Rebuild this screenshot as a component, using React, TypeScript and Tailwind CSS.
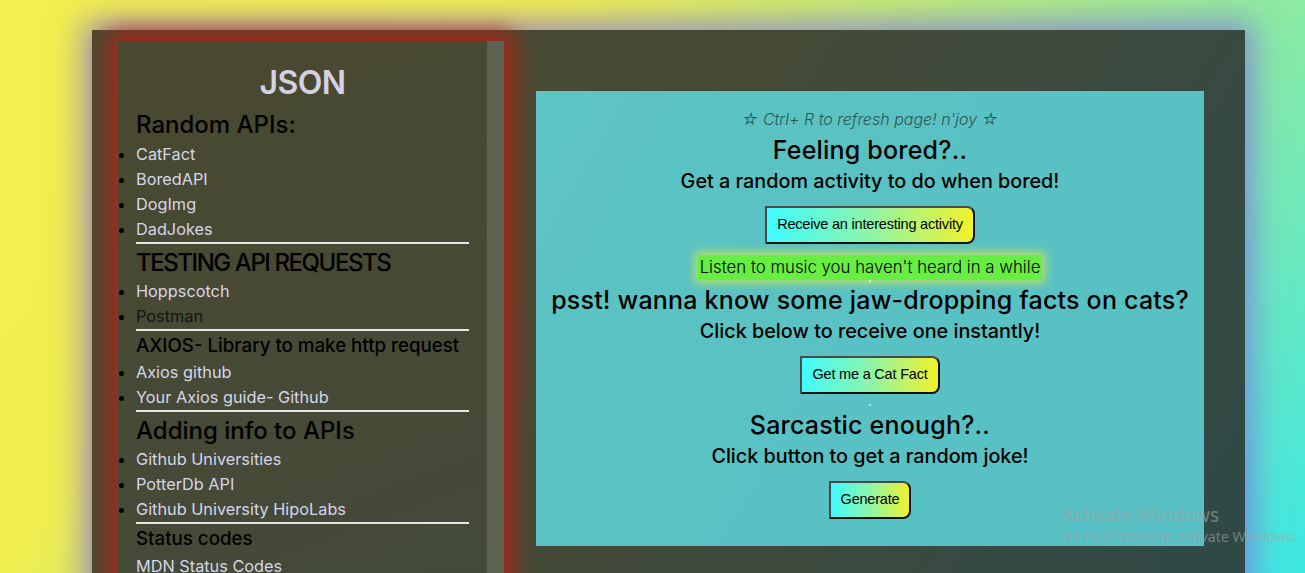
import React from "react";

const linkCls = "text-[#d6d6ea]";

function Li({ children, dark }: { children: React.ReactNode; dark?: boolean }) {
  return (
    <li className="h-[25px] leading-[25px] text-[16.3px] text-black">
      <span className={dark ? "text-[#151515]" : linkCls}>{children}</span>
    </li>
  );
}

function Rule() {
  return <div className="h-[2px] bg-[#e6e6e6]" />;
}

function Btn({ children }: { children: React.ReactNode }) {
  return (
    <button className="h-[38px] px-[10px] text-[14.5px] tracking-[-0.2px] font-['Liberation_Sans',Arial,sans-serif] text-black border-2 border-[#4a4a4a] border-r-[#111] border-b-[#111] rounded-r-[8px] bg-[linear-gradient(to_right,#3ffcff,#8ef5a8_50%,#f2f22a)]">
      {children}
    </button>
  );
}

export default function App() {
  return (
    <div className="relative h-[573px] w-[1305px] overflow-hidden bg-[linear-gradient(135deg,#f3ef4e_0%,#f0ee50_30%,#3de8e4_100%)] font-['Inter','Noto_Sans',sans-serif]">
      <div className="ml-[92px] mt-[30px] flex h-[600px] w-[1153px] items-start bg-[linear-gradient(120deg,#4b4a30_0%,#474a34_40%,#2e4948_100%)] shadow-[0_0_30px_8px_rgba(125,110,225,0.75)]">
        {/* Sidebar */}
        <div className="ml-[26px] mt-[11px] flex h-[600px] w-[386px] shadow-[0_0_22px_9px_#ab2619]">
          <div className="flex-1 bg-[linear-gradient(160deg,#4a4930,#434a3a)] px-[18px] pt-[22px]">
            <div className="h-[40px] text-center text-[32px] font-semibold leading-[40px] tracking-[-0.5px] text-[#d2d2e2]">JSON</div>
            <div className="mt-[7px] h-[30px] text-[24px] font-medium leading-[30px] text-black">Random APIs:</div>
            <ul className="mt-[2px] list-disc">
              <Li>CatFact</Li>
              <Li>BoredAPI</Li>
              <Li>DogImg</Li>
              <Li>DadJokes</Li>
            </ul>
            <Rule />
            <div className="mt-[4px] h-[30px] text-[24px] font-medium leading-[30px] tracking-[-0.06em] text-black">TESTING API REQUESTS</div>
            <ul className="mt-[1px] list-disc">
              <Li>Hoppscotch</Li>
              <Li dark>Postman</Li>
            </ul>
            <Rule />
            <div className="mt-[3px] h-[24px] text-[18.72px] font-medium leading-[24px] text-black">AXIOS- Library to make http request</div>
            <ul className="mt-[2px] list-disc">
              <Li>Axios github</Li>
              <Li>Your Axios guide- Github</Li>
            </ul>
            <Rule />
            <div className="mt-[4px] h-[30px] text-[24px] font-medium leading-[30px] text-black">Adding info to APIs</div>
            <ul className="mt-[1px] list-disc">
              <Li>Github Universities</Li>
              <Li>PotterDb API</Li>
              <Li>Github University HipoLabs</Li>
            </ul>
            <Rule />
            <div className="mt-[3px] h-[24px] text-[18.72px] font-medium leading-[24px] text-black">Status codes</div>
            <div className="mt-[3px] h-[25px] text-[16.3px] leading-[25px] text-[#d6d6ea]">MDN Status Codes</div>
          </div>
          <div className="w-[17px] bg-[#5e6250]" />
        </div>

        {/* Card */}
        <div className="ml-[32px] mt-[61px] flex h-[455px] w-[668px] flex-col items-center bg-[linear-gradient(120deg,#5dc3c3,#56c0c4)] pt-[16px] text-black">
          <div className="h-[24px] text-[16px] font-light italic leading-[24px] text-[#285656]">☆ Ctrl+ R to refresh page! n'joy ☆</div>
          <div className="mt-[4px] h-[30px] text-[25px] font-medium leading-[30px] tracking-[0.2px]">Feeling bored?..</div>
          <div className="mt-[4px] h-[24px] text-[19.8px] font-medium leading-[24px]">Get a random activity to do when bored!</div>
          <div className="mt-[13px]">
            <Btn>Receive an interesting activity</Btn>
          </div>
          <div className="mt-[11px] h-[25px] bg-[#66ee42] px-[2px] text-[16.8px] font-light leading-[25px] shadow-[0_0_10px_3px_rgba(215,240,70,0.75)]">
            Listen to music you haven't heard in a while
          </div>
          <div className="h-[3px] w-[2px] bg-[#e0f0f0]/60" />
          <div className="mt-[2px] h-[30px] text-[25px] font-medium leading-[30px] tracking-[0.2px]">psst! wanna know some jaw-dropping facts on cats?</div>
          <div className="mt-[4px] h-[24px] text-[19.8px] font-medium leading-[24px]">Click below to receive one instantly!</div>
          <div className="mt-[13px]">
            <Btn>Get me a Cat Fact</Btn>
          </div>
          <div className="mt-[10px] h-[2px] w-[2px] bg-[#e0f0f0]/70" />
          <div className="mt-[4px] h-[30px] text-[25px] font-medium leading-[30px] tracking-[0.2px]">Sarcastic enough?..</div>
          <div className="mt-[4px] h-[24px] text-[19.8px] font-medium leading-[24px]">Click button to get a random joke!</div>
          <div className="mt-[13px]">
            <Btn>Generate</Btn>
          </div>
        </div>
      </div>

      {/* Windows activation watermark overlay */}
      <div className="pointer-events-none absolute left-[1062px] top-[504px] font-['Noto_Sans','Open_Sans',sans-serif] text-[rgba(165,165,165,0.6)]">
        <div className="text-[19px] leading-[23px]">Activate Windows</div>
        <div className="text-[14.2px] leading-[19px]">Go to Settings to activate Windows.</div>
      </div>
    </div>
  );
}
